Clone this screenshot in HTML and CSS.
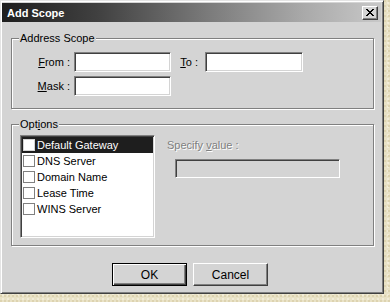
FILE: index.html
```html
<!DOCTYPE html>
<html lang="en">
<head>
  <meta charset="UTF-8" />
  <title>Add Scope</title>
  <meta name="viewport" content="width=device-width, initial-scale=1.0" />
  <link rel="stylesheet" href="styles.css">
</head>
<body>
  <div class="window">
    <div class="titlebar">
      <span class="title">Add Scope</span>
      <button class="close" title="Close">
        <svg width="8" height="7" viewBox="0 0 8 7">
          <path d="M0 0h2v1h-2zM6 0h2v1h-2zM1 1h2v1h-2zM5 1h2v1h-2zM2 2h4v1h-4zM3 3h2v1h-2zM2 4h4v1h-4zM1 5h2v1h-2zM5 5h2v1h-2zM0 6h2v1h-2zM6 6h2v1h-2z" fill="#000"/>
        </svg>
      </button>
    </div>

    <div class="content">
      <fieldset class="group scope">
        <legend>Address Scope</legend>
        <div class="scope-grid">
          <label><u>F</u>rom :</label>
          <input class="field" type="text">
          <label class="to"><u>T</u>o :</label>
          <input class="field wide" type="text">
          <label><u>M</u>ask :</label>
          <input class="field" type="text">
        </div>
      </fieldset>

      <fieldset class="group options">
        <legend>Opt<u>i</u>ons</legend>
        <div class="options-row">
          <ul class="listbox">
            <li class="selected"><span class="check"></span>Default Gateway</li>
            <li><span class="check"></span>DNS Server</li>
            <li><span class="check"></span>Domain Name</li>
            <li><span class="check"></span>Lease Time</li>
            <li><span class="check"></span>WINS Server</li>
          </ul>
          <div class="value">
            <div class="disabled-label">Specify <u>v</u>alue :</div>
            <input class="field value-field" type="text" disabled>
          </div>
        </div>
      </fieldset>

      <div class="buttons">
        <button class="btn default">OK</button>
        <button class="btn">Cancel</button>
      </div>
    </div>
  </div>
</body>
</html>
```

FILE: styles.css
```css
body {
  margin: 0;
  width: 390px;
  height: 302px;
  overflow: hidden;
  background-color: #e9e2c6;
  background-image:
    radial-gradient(circle at 1px 1px, #ddd3b0 1px, transparent 1px),
    radial-gradient(circle at 3px 3px, #f2ecd8 1px, transparent 1px);
  background-size: 4px 5px, 5px 4px;
  font-family: "Liberation Sans", Arial, sans-serif;
  font-size: 11px;
  color: #000;
}
.window {
  width: 384px;
  height: 294px;
  box-sizing: border-box;
  padding: 2px 2px 2px 1px;
  background: #d4d4d4;
  border: 1px solid;
  border-color: #e4e4e4 #404040 #404040 #e4e4e4;
  box-shadow: inset 1px 1px 0 #fff, inset -1px -1px 0 #808080;
}
.titlebar {
  height: 19px;
  display: flex;
  align-items: center;
  justify-content: space-between;
  padding: 0 3px 0 5px;
  background: linear-gradient(to right, #1e1e1e, #404040 25%, #7c7c7c 55%, #aaaaaa 80%, #c8c8c8);
}
.title {
  color: #fff;
  font-weight: bold;
  font-size: 11px;
}
.close {
  width: 16px;
  height: 14px;
  padding: 0;
  display: flex;
  align-items: center;
  justify-content: center;
  background: #d4d4d4;
  border: 1px solid;
  border-color: #fff #404040 #404040 #fff;
  box-shadow: inset -1px -1px 0 #808080;
}
.content {
  padding: 10px 0 0 9px;
}
.group {
  margin: 0;
  padding: 0;
  width: 363px;
  box-sizing: border-box;
  min-width: 0;
  border: 1px solid #808080;
  box-shadow: inset 1px 1px 0 #fff, 1px 1px 0 #fff;
}
.group legend {
  margin-left: 7px;
  padding: 0 1px;
  line-height: 13px;
  background: #d4d4d4;
}
.scope {
  height: 77px;
}
.scope-grid {
  display: grid;
  grid-template-columns: 58px 97px 26px 98px;
  grid-auto-rows: 20px;
  column-gap: 4px;
  row-gap: 4px;
  margin-top: 7px;
  align-items: center;
}
.scope-grid label {
  text-align: right;
}
.scope-grid .to {
  padding-right: 3px;
}
.field {
  box-sizing: border-box;
  height: 20px;
  width: 97px;
  margin: 0;
  padding: 2px 3px;
  font: inherit;
  background: #fff;
  border: 1px solid;
  border-color: #808080 #fff #fff #808080;
  box-shadow: inset 1px 1px 0 #404040, inset -1px -1px 0 #d4d4d4;
  outline: none;
}
.field.wide {
  width: 98px;
}
.options {
  margin-top: 9px;
  height: 128px;
}
.options-row {
  display: flex;
  margin-top: 4px;
  padding-left: 8px;
}
.listbox {
  list-style: none;
  margin: 0;
  padding: 1px 0 0;
  width: 135px;
  height: 103px;
  box-sizing: border-box;
  background: #fff;
  border: 1px solid;
  border-color: #808080 #fff #fff #808080;
  box-shadow: inset 1px 1px 0 #404040, inset -1px -1px 0 #d4d4d4;
  overflow: hidden;
}
.listbox li {
  height: 16px;
  margin: 0 1px;
  display: flex;
  align-items: center;
  white-space: nowrap;
}
.listbox li.selected {
  background: #1e1e1e;
  color: #fff;
}
.check {
  width: 12px;
  height: 12px;
  box-sizing: border-box;
  margin: 0 2px 0 1px;
  background: #fff;
  border: 1px solid #808080;
}
.selected .check {
  border-color: #d4d4d4;
}
.value {
  margin-left: 12px;
  padding-top: 4px;
}
.disabled-label {
  line-height: 13px;
  color: #808080;
  text-shadow: 1px 1px 0 #fff;
}
.value-field {
  display: block;
  width: 165px;
  height: 19px;
  margin: 7px 0 0 8px;
  background: #d4d4d4;
}
.buttons {
  display: flex;
  justify-content: center;
  gap: 6px;
  margin-top: 17px;
  padding-right: 12px;
}
.btn {
  width: 75px;
  height: 23px;
  padding: 0;
  font: inherit;
  font-size: 12px;
  color: #000;
  background: #d4d4d4;
  border: 1px solid;
  border-color: #fff #404040 #404040 #fff;
  box-shadow: inset -1px -1px 0 #808080;
}
.btn.default {
  border: 1px solid #000;
  box-shadow: inset 1px 1px 0 #fff, inset -1px -1px 0 #404040, inset -2px -2px 0 #808080;
}
```
